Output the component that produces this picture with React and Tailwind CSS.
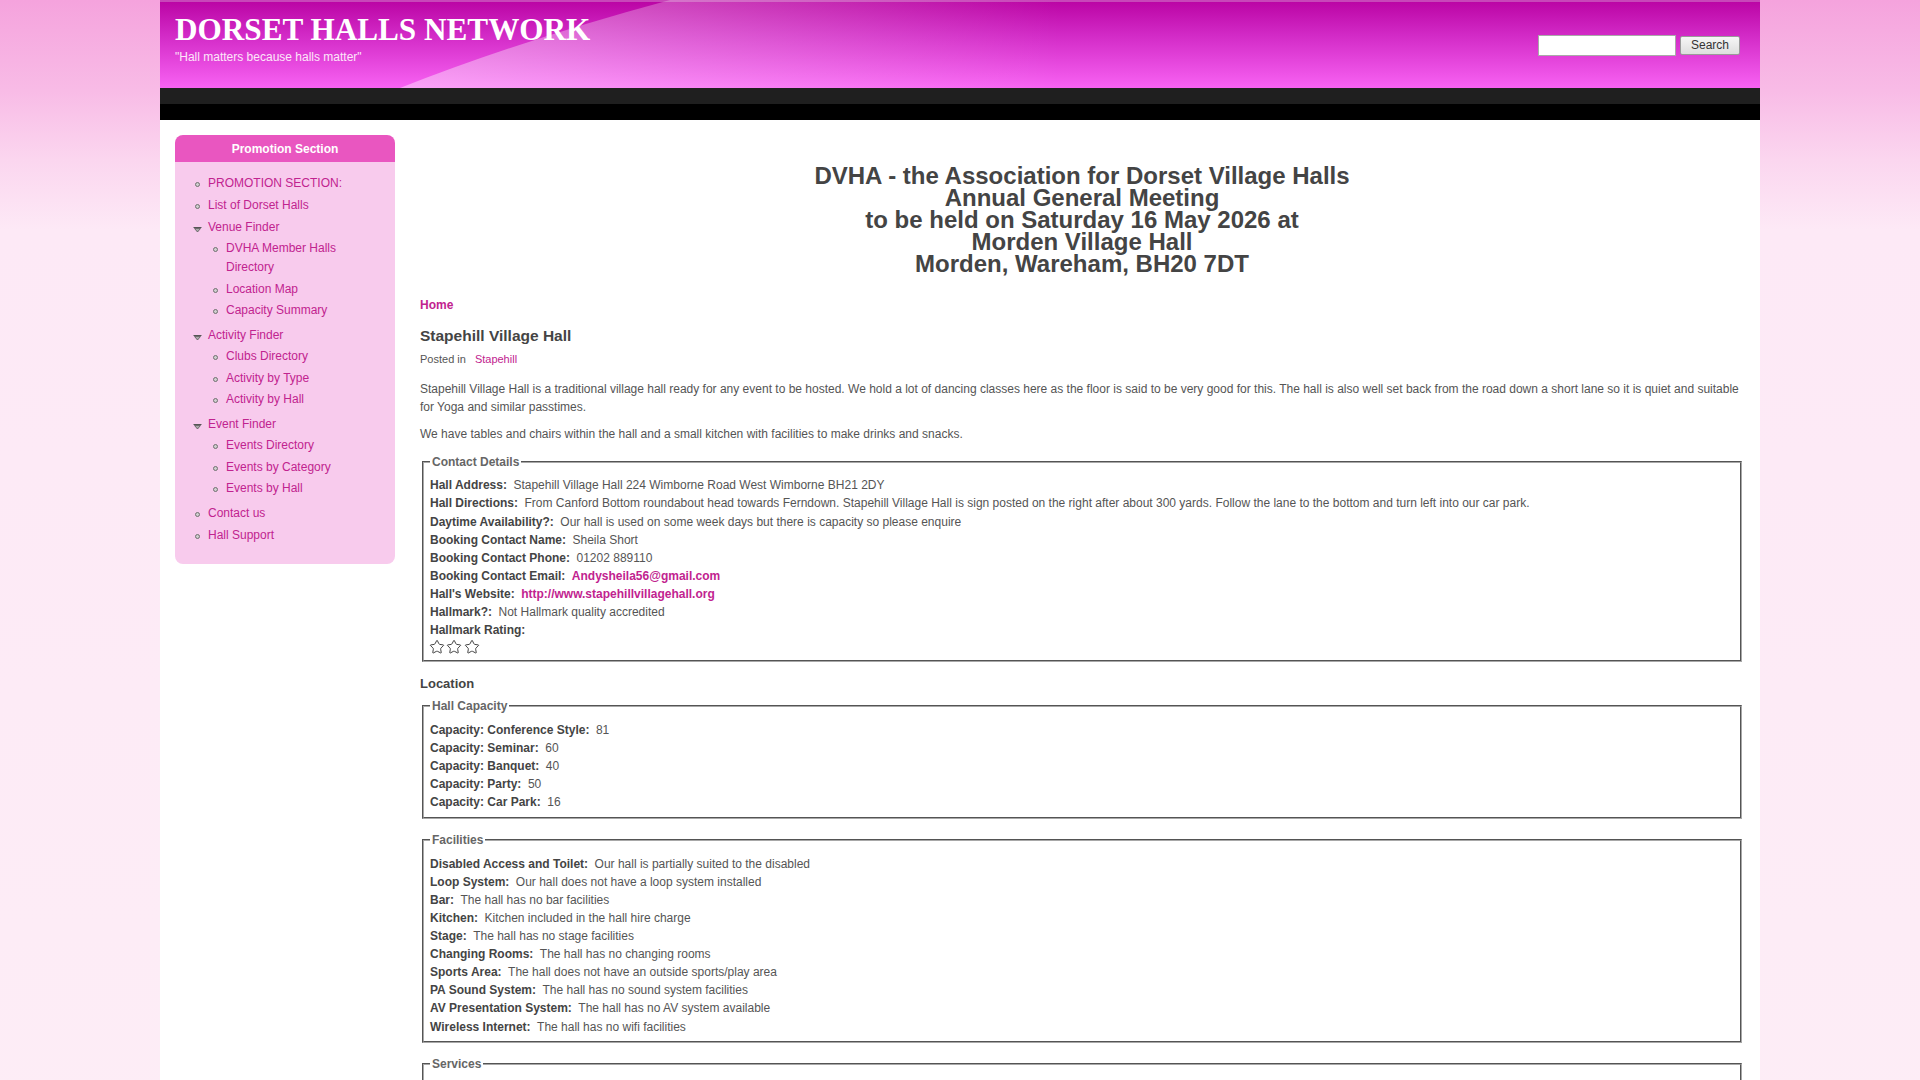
import React from "react";
import { Star } from "lucide-react";

const LINK = "text-[#c1238f]";

function Bullet() {
  return <span className="block w-[5px] h-[5px] rounded-full border border-[#707070] bg-[#cfcfcf]" />;
}

function Tri() {
  return (
    <svg width="9" height="6" viewBox="0 0 9 6" className="block">
      <line x1="0.5" y1="0.5" x2="8.5" y2="0.5" stroke="#555" strokeWidth="1" />
      <polygon points="1.5,1.5 7.5,1.5 4.5,5" fill="#aaa" stroke="#555" strokeWidth="0.8" />
    </svg>
  );
}

function Item({ label, children, sub }) {
  return (
    <li className={sub ? "pb-[2.5px] last:pb-0" : "pb-[3px]"}>
      <div className="flex">
        <span className={"w-[16px] shrink-0 flex " + (children ? "pl-[1px] pt-[9px]" : "pl-[3px] pt-[8px]")}>
          {children ? <Tri /> : <Bullet />}
        </span>
        <a className={LINK + " leading-[19px]"}>{label}</a>
      </div>
      {children && <ul className="pl-[18px] pt-[2.5px] pb-[2.5px]">{children}</ul>}
    </li>
  );
}

function Row({ label, children }) {
  return (
    <div className="leading-[18.1px]">
      <span className="font-bold text-[#444]">{label}</span>
      <span className="ml-[6.5px] text-[#555]">{children}</span>
    </div>
  );
}

function Box({ title, className = "", children }) {
  return (
    <fieldset className={"mx-[2px] border-2 [border-style:groove] border-[#a8a8a8] px-[6px] pt-[7.5px] " + className}>
      <legend className="px-[2px] text-[12px] leading-[14px] font-bold text-[#666]">{title}</legend>
      {children}
    </fieldset>
  );
}

export default function App() {
  return (
    <div className="min-h-screen bg-[linear-gradient(to_bottom,#f5a3dd_0px,#f8bbe6_90px,#fbd6ef_160px,#fde9f6_230px,#fdedf6_100%)] font-['Liberation_Sans',Arial,sans-serif] text-[12px]">
      <div className="mx-auto w-[1600px] min-h-screen bg-white">
        <header className="relative h-[88px] flex justify-between overflow-hidden bg-[linear-gradient(to_bottom,#c847b9_0px,#c847b9_2px,#bb05a5_2px,#d22ac6_40%,#f862f3_100%)]">
          <svg className="absolute inset-0 w-full h-full" viewBox="0 0 1600 88" preserveAspectRatio="none">
            <defs>
              <linearGradient id="gl" gradientUnits="userSpaceOnUse" x1="237" y1="0" x2="900" y2="0">
                <stop offset="0" stopColor="#ffffff" stopOpacity="0.42" />
                <stop offset="1" stopColor="#ffffff" stopOpacity="0" />
              </linearGradient>
            </defs>
            <path d="M510 0 Q362 40 240 88 L1000 88 L1000 0 Z" fill="url(#gl)" />
          </svg>
          <div className="relative pl-[15px] pt-[12px]">
            <h1 className="font-['Liberation_Serif','Times_New_Roman',serif] font-bold text-[31.2px] leading-[36px] text-white">
              DORSET HALLS NETWORK
            </h1>
            <p className="mt-[2px] text-[12px] leading-[14px] text-[#fde6f9]">"Hall matters because halls matter"</p>
          </div>
          <form className="relative flex items-start gap-[4px] pt-[35px] pr-[20px]" onSubmit={(e) => e.preventDefault()}>
            <input className="w-[138px] h-[21px] bg-white border border-[#a9a9a9] outline-none" />
            <button className="w-[60px] h-[19px] mt-[1px] border border-[#9a9a9a] rounded-[2px] bg-[linear-gradient(to_bottom,#f6f6f6,#dedede)] text-[12px] leading-[17px] text-[#333]">
              Search
            </button>
          </form>
        </header>
        <div className="h-[32px] bg-[linear-gradient(to_bottom,#1f1f1f_50%,#000_50%)]" />

        <div className="flex pl-[15px] pr-[16px] pt-[15px]">
          <aside className="w-[220px] shrink-0 self-start">
            <div className="h-[27px] rounded-t-[8px] bg-[#e956c0] text-white font-bold text-[12px] flex items-center justify-center">
              Promotion Section
            </div>
            <div className="bg-[#f8cbed] rounded-b-[8px] pt-[11.5px] pb-[16px] pr-[15px]">
              <ul className="pl-[17px]">
                <Item label="PROMOTION SECTION:" />
                <Item label="List of Dorset Halls" />
                <Item label="Venue Finder">
                  <Item sub label="DVHA Member Halls Directory" />
                  <Item sub label="Location Map" />
                  <Item sub label="Capacity Summary" />
                </Item>
                <Item label="Activity Finder">
                  <Item sub label="Clubs Directory" />
                  <Item sub label="Activity by Type" />
                  <Item sub label="Activity by Hall" />
                </Item>
                <Item label="Event Finder">
                  <Item sub label="Events Directory" />
                  <Item sub label="Events by Category" />
                  <Item sub label="Events by Hall" />
                </Item>
                <Item label="Contact us" />
                <Item label="Hall Support" />
              </ul>
            </div>
          </aside>

          <main className="ml-[25px] flex-1 min-w-0 pb-[40px]">
            <h2 className="mt-[29.5px] text-center text-[24px] leading-[22px] font-bold text-[#444]">
              DVHA - the Association for Dorset Village Halls
              <br />
              Annual General Meeting
              <br />
              to be held on Saturday 16 May 2026 at
              <br />
              Morden Village Hall
              <br />
              Morden, Wareham, BH20 7DT
            </h2>
            <div className={"mt-[21.5px] text-[12px] leading-[18px] font-bold " + LINK}>Home</div>
            <h3 className="mt-[11.5px] text-[15.5px] leading-[20px] font-bold text-[#444]">Stapehill Village Hall</h3>
            <div className="mt-[5px] text-[11px] leading-[16px] text-[#555]">
              Posted in<a className={"ml-[9px] " + LINK}>Stapehill</a>
            </div>
            <p className="mt-[13px] leading-[18.3px] text-[#555]">
              Stapehill Village Hall is a traditional village hall ready for any event to be hosted. We hold a lot of dancing classes here as the floor is said to be very good for this. The hall is also well set back from the road down a short lane so it is quiet and suitable for Yoga and similar passtimes.
            </p>
            <p className="mt-[8.5px] leading-[18.3px] text-[#555]">
              We have tables and chairs within the hall and a small kitchen with facilities to make drinks and snacks.
            </p>

            <Box title="Contact Details" className="mt-[12px] pb-[5px]">
              <Row label="Hall Address:">Stapehill Village Hall 224 Wimborne Road West Wimborne BH21 2DY</Row>
              <Row label="Hall Directions:">
                From Canford Bottom roundabout head towards Ferndown. Stapehill Village Hall is sign posted on the right after about 300 yards. Follow the lane to the bottom and turn left into our car park.
              </Row>
              <Row label="Daytime Availability?:">Our hall is used on some week days but there is capacity so please enquire</Row>
              <Row label="Booking Contact Name:">Sheila Short</Row>
              <Row label="Booking Contact Phone:">01202 889110</Row>
              <div className="leading-[18.1px]">
                <span className="font-bold text-[#444]">Booking Contact Email:</span>
                <a className={"ml-[6.5px] font-bold " + LINK}>Andysheila56@gmail.com</a>
              </div>
              <div className="leading-[18.1px]">
                <span className="font-bold text-[#444]">Hall's Website:</span>
                <a className={"ml-[6.5px] font-bold " + LINK}>http://www.stapehillvillagehall.org</a>
              </div>
              <Row label="Hallmark?:">Not Hallmark quality accredited</Row>
              <div className="leading-[18.1px] font-bold text-[#444]">Hallmark Rating:</div>
              <div className="h-[16px] flex items-center gap-[1.3px] -ml-[1px]">
                <Star size={16} strokeWidth={1.5} color="#444" />
                <Star size={16} strokeWidth={1.5} color="#444" />
                <Star size={16} strokeWidth={1.5} color="#444" />
              </div>
            </Box>

            <div className="mt-[14px] text-[13px] leading-[16px] font-bold text-[#444]">Location</div>

            <Box title="Hall Capacity" className="mt-[7px] pb-[6px]">
              <Row label="Capacity: Conference Style:">81</Row>
              <Row label="Capacity: Seminar:">60</Row>
              <Row label="Capacity: Banquet:">40</Row>
              <Row label="Capacity: Party:">50</Row>
              <Row label="Capacity: Car Park:">16</Row>
            </Box>

            <Box title="Facilities" className="mt-[14px] pb-[5px]">
              <Row label="Disabled Access and Toilet:">Our hall is partially suited to the disabled</Row>
              <Row label="Loop System:">Our hall does not have a loop system installed</Row>
              <Row label="Bar:">The hall has no bar facilities</Row>
              <Row label="Kitchen:">Kitchen included in the hall hire charge</Row>
              <Row label="Stage:">The hall has no stage facilities</Row>
              <Row label="Changing Rooms:">The hall has no changing rooms</Row>
              <Row label="Sports Area:">The hall does not have an outside sports/play area</Row>
              <Row label="PA Sound System:">The hall has no sound system facilities</Row>
              <Row label="AV Presentation System:">The hall has no AV system available</Row>
              <Row label="Wireless Internet:">The hall has no wifi facilities</Row>
            </Box>

            <Box title="Services" className="mt-[14px] pb-[5px]">
              <Row label="Catering:">No catering services available</Row>
              <Row label="Equipment Hire:">No equipment available for hire</Row>
            </Box>
          </main>
        </div>
      </div>
    </div>
  );
}
